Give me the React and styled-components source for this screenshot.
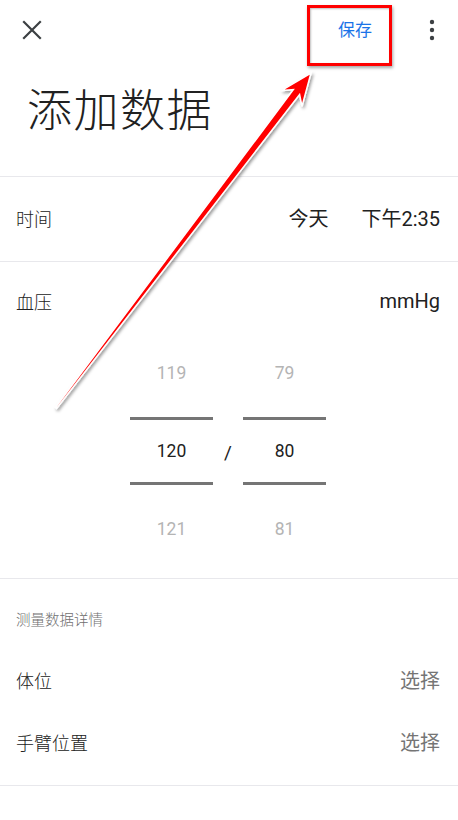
import React from 'react';
import styled, { createGlobalStyle } from 'styled-components';

const GlobalStyle = createGlobalStyle`
  html, body {
    margin: 0;
    padding: 0;
    background: #fff;
  }
  body {
    font-family: Roboto, "Noto Sans CJK SC", sans-serif;
    color: #202124;
  }
`;

const Screen = styled.div`
  position: relative;
  width: 458px;
  height: 820px;
  overflow: hidden;
  background: #fff;
`;

const TopBar = styled.div`
  height: 60px;
  display: flex;
  align-items: center;
  padding: 0 14px 0 20px;
`;

const IconButton = styled.button`
  border: 0;
  background: none;
  padding: 0;
  width: 24px;
  height: 24px;
  display: flex;
  align-items: center;
  justify-content: center;
  color: #3c4043;
`;

const SaveButton = styled.button`
  margin-left: auto;
  margin-right: 48px;
  border: 0;
  background: none;
  padding: 0;
  font-family: "Noto Sans CJK SC", sans-serif;
  font-size: 17px;
  color: #1a73e8;
  margin-top: -4px;
`;

const Title = styled.h1`
  margin: 0;
  padding: 18px 0 38px 27px;
  font-family: "Noto Sans CJK SC", sans-serif;
  font-weight: 300;
  font-size: 45px;
  line-height: 60px;
  color: #212121;
  letter-spacing: 1.5px;
`;

const Divider = styled.div`
  height: 1px;
  background: #e8e8ec;
`;

const Row = styled.div`
  display: flex;
  align-items: center;
  height: ${p => p.h || 62}px;
  padding: 0 18px 3px 16px;
  box-sizing: border-box;
`;

const Label = styled.span`
  font-family: "Noto Sans CJK SC", sans-serif;
  font-weight: 300;
  font-size: 18px;
  color: #212121;
`;

const Value = styled.span`
  font-family: Roboto, "Noto Sans CJK SC", sans-serif;
  font-size: 20px;
  color: ${p => (p.muted ? '#757575' : '#212121')};
  margin-left: ${p => p.gap || 0}px;
`;

const Spacer = styled.div`
  flex: 1;
`;

const BloodSection = styled.div`
  padding: 27px 0 5px;
`;

const LabelRow = styled.div`
  display: flex;
  align-items: center;
  height: 24px;
  padding: 0 18px 0 16px;
  margin-bottom: 16px;
`;

const Picker = styled.div`
  display: flex;
  justify-content: center;
  padding-right: 2px;
`;

const Column = styled.div`
  width: 83px;
  display: flex;
  flex-direction: column;
`;

const Cell = styled.div`
  height: ${p => (p.active ? 62 : 88)}px;
  display: flex;
  align-items: center;
  justify-content: center;
  font-family: Roboto, sans-serif;
  font-size: 17.5px;
  color: ${p => (p.active ? '#212121' : '#b4b4b4')};
`;

const Rule = styled.div`
  height: 3px;
  background: #757575;
`;

const Slash = styled.div`
  width: 30px;
  display: flex;
  align-items: center;
  justify-content: center;
  font-family: Roboto, sans-serif;
  font-size: 19px;
  color: #212121;
  padding-top: 2px;
`;

const Details = styled.div`
  padding: 30px 0 11px;
`;

const Subtitle = styled.div`
  padding-left: 16px;
  height: 20px;
  line-height: 20px;
  font-family: "Noto Sans CJK SC", sans-serif;
  font-weight: 300;
  font-size: 14.5px;
  color: #6f6f6f;
  margin-bottom: 21px;
`;

const Highlight = styled.div`
  position: absolute;
  left: 307px;
  top: 5px;
  width: 79px;
  height: 55px;
  border: 3px solid #ff0000;
  box-shadow: 1px 2px 3px rgba(0, 0, 0, 0.35), inset 1px 1px 2px rgba(0, 0, 0, 0.25);
  pointer-events: none;
`;

const Overlay = styled.svg`
  position: absolute;
  left: 0;
  top: 0;
  pointer-events: none;
`;

function CloseIcon() {
  return (
    <svg width="20" height="20" viewBox="0 0 20 20">
      <path d="M2 2 L18 18 M18 2 L2 18" stroke="#3c4043" strokeWidth="2.2" strokeLinecap="square" />
    </svg>
  );
}

function MoreIcon() {
  return (
    <svg width="24" height="24" viewBox="0 0 24 24">
      <circle cx="12" cy="4" r="2.2" fill="#3c4043" />
      <circle cx="12" cy="12" r="2.2" fill="#3c4043" />
      <circle cx="12" cy="20" r="2.2" fill="#3c4043" />
    </svg>
  );
}

function Arrow() {
  // tail (56,408) to tip (311,73)
  const tip = [311, 73];
  const tail = [56, 408];
  const dx = tip[0] - tail[0];
  const dy = tip[1] - tail[1];
  const len = Math.hypot(dx, dy);
  const u = [dx / len, dy / len];
  const n = [-u[1], u[0]];
  const at = (d, w) => [tip[0] - u[0] * d + n[0] * w, tip[1] - u[1] * d + n[1] * w];
  const pts = [
    tip,
    at(32, 13),
    at(24, 4),
    [tail[0] + n[0] * 0.8, tail[1] + n[1] * 0.8],
    [tail[0] - n[0] * 0.8, tail[1] - n[1] * 0.8],
    at(24, -4),
    at(32, -13),
  ];
  const d = pts.map(p => p.map(v => v.toFixed(1)).join(',')).join(' ');
  return (
    <Overlay width="458" height="820">
      <defs>
        <filter id="shadow" x="-10%" y="-10%" width="130%" height="130%">
          <feDropShadow dx="1.5" dy="2" stdDeviation="1.5" floodColor="#000" floodOpacity="0.4" />
        </filter>
      </defs>
      <polygon points={d} fill="#ff0000" stroke="#fff" strokeWidth="1.5" strokeLinejoin="miter" filter="url(#shadow)" />
    </Overlay>
  );
}

const pickerData = [
  ['119', '120', '121'],
  ['79', '80', '81'],
];

function PickerColumn({ values }) {
  return (
    <Column>
      <Cell>{values[0]}</Cell>
      <Rule />
      <Cell active>{values[1]}</Cell>
      <Rule />
      <Cell>{values[2]}</Cell>
    </Column>
  );
}

export default function App() {
  return (
    <>
      <GlobalStyle />
      <Screen>
        <TopBar>
          <IconButton>
            <CloseIcon />
          </IconButton>
          <SaveButton>保存</SaveButton>
          <IconButton>
            <MoreIcon />
          </IconButton>
        </TopBar>
        <Title>添加数据</Title>
        <Divider />
        <Row h={84}>
          <Label>时间</Label>
          <Spacer />
          <Value>今天</Value>
          <Value gap={33}>下午2:35</Value>
        </Row>
        <Divider />
        <BloodSection>
          <LabelRow>
            <Label>血压</Label>
            <Spacer />
            <Value>mmHg</Value>
          </LabelRow>
          <Picker>
            <PickerColumn values={pickerData[0]} />
            <Slash>/</Slash>
            <PickerColumn values={pickerData[1]} />
          </Picker>
        </BloodSection>
        <Divider />
        <Details>
          <Subtitle>测量数据详情</Subtitle>
          <Row>
            <Label>体位</Label>
            <Spacer />
            <Value muted>选择</Value>
          </Row>
          <Row>
            <Label>手臂位置</Label>
            <Spacer />
            <Value muted>选择</Value>
          </Row>
        </Details>
        <Divider />
        <Highlight />
        <Arrow />
      </Screen>
    </>
  );
}
